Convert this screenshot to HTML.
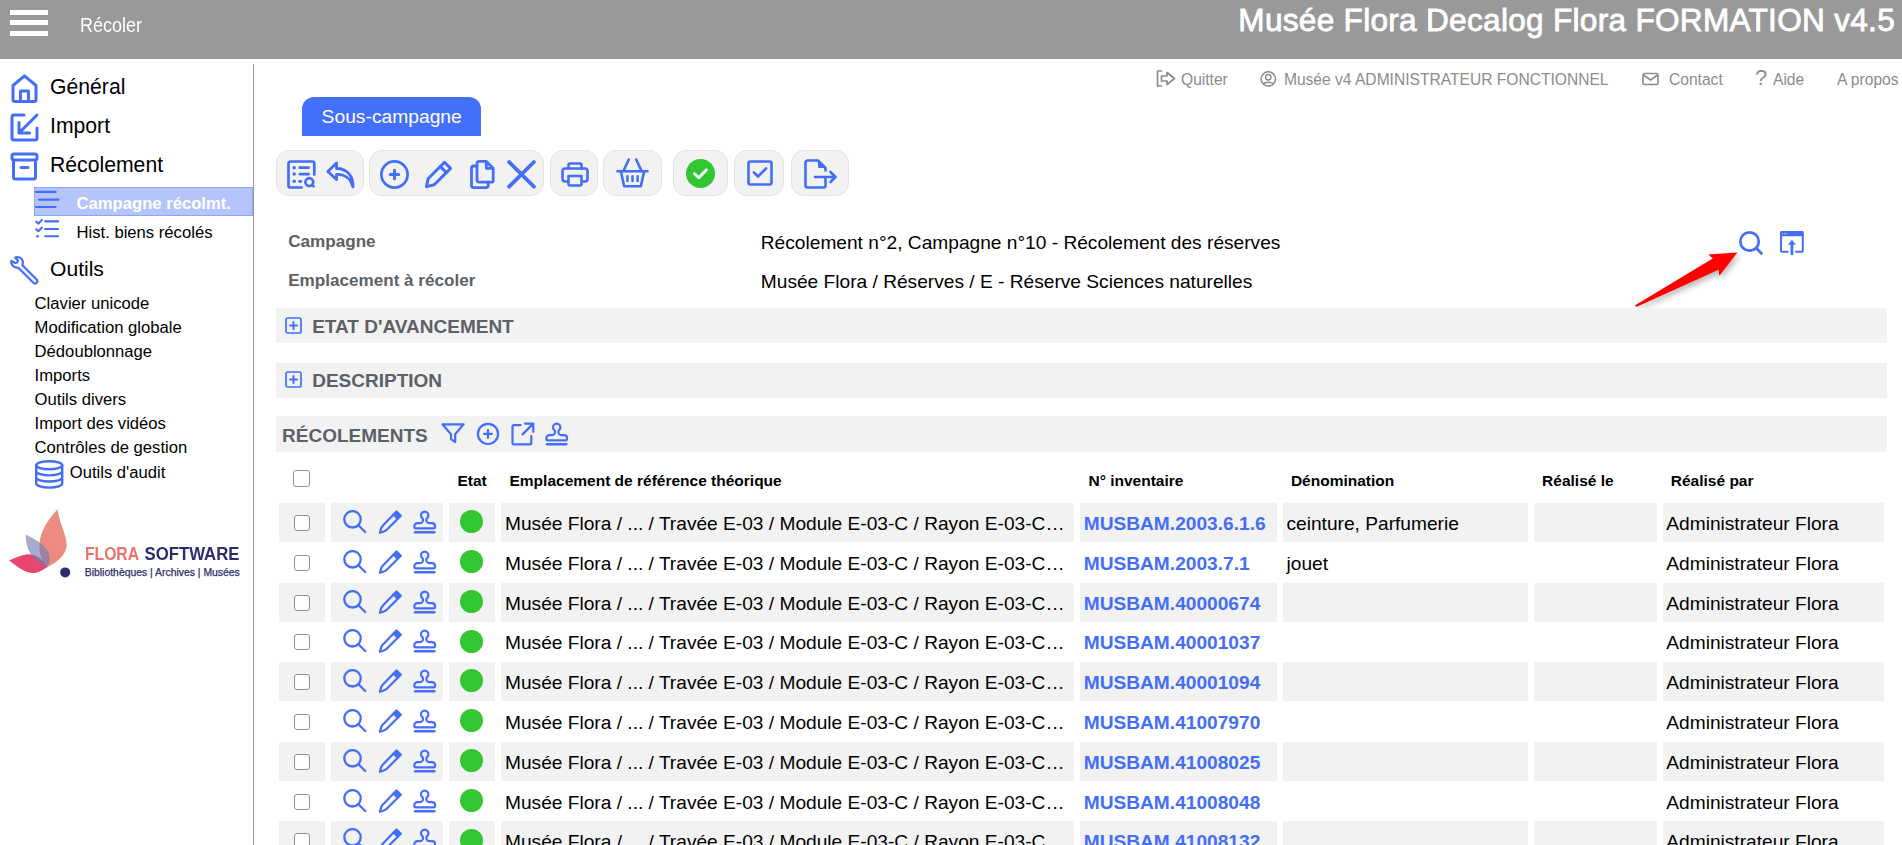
<!DOCTYPE html>
<html><head><meta charset="utf-8">
<style>
html,body{margin:0;padding:0;width:1902px;height:845px;overflow:hidden;background:#fff;font-family:"Liberation Sans",sans-serif;}
.t{position:absolute;white-space:nowrap;line-height:1;}
.a{position:absolute;}
svg{position:absolute;overflow:visible;}
.ic{fill:none;stroke:#446ef9;stroke-linecap:round;stroke-linejoin:round;}
.hdr{position:absolute;left:0;top:0;width:1902px;height:59px;background:#999999;}
.bar{position:absolute;left:10px;width:38px;height:5px;background:#fff;}
.side{position:absolute;left:253px;top:64px;width:1px;height:781px;background:#9a9a9a;}
.sb{font-size:21.2px;color:#000;}
.sub{font-size:16.65px;color:#000;}
.btn{position:absolute;top:150px;height:46px;background:#f2f2f2;border:1px solid #e3e3e3;box-sizing:border-box;border-radius:13px;}
.sec{position:absolute;left:276px;width:1611px;background:#f2f2f2;}
.sect{font-size:19px;font-weight:bold;color:#5b6166;}
.lbl{font-size:17.1px;font-weight:bold;color:#5b6166;}
.val{font-size:19.15px;color:#000;}
.th{font-size:15.5px;font-weight:bold;color:#000;}
.cell{position:absolute;height:38.6px;background:#f2f2f2;}
.cb{position:absolute;width:14px;height:14px;border:1px solid #8f8f9d;border-radius:3px;background:#fff;}
.rt{font-size:19.15px;color:#000;}
.lnk{font-size:19.15px;font-weight:bold;color:#446ef9;}
.top{font-size:15.6px;color:#8c8c8c;}
</style></head><body>
<div class="hdr"></div>
<div class="bar" style="top:9.6px"></div>
<div class="bar" style="top:20.4px"></div>
<div class="bar" style="top:31.2px"></div>
<div class="t" style="left:80px;top:16.9px;font-size:18px;color:#fff;transform:scaleY(1.12);transform-origin:0 15.3px">Récoler</div>
<div class="t" style="right:7px;top:5px;font-size:31.6px;color:#fff;-webkit-text-stroke:0.8px #fff;letter-spacing:0.28px;">Musée Flora Decalog Flora FORMATION v4.5</div>

<div class="side"></div>
<!-- SIDEBAR -->
<svg style="left:11px;top:74px" width="27" height="29" viewBox="0 0 27 29"><path class="ic" stroke-width="3" d="M2 11.5 L13.5 1.8 L25 11.5 V25.5 a2 2 0 0 1 -2 2 H4 a2 2 0 0 1 -2 -2 Z M9.5 27.5 V17 H17.5 V27.5"/></svg>
<div class="t sb" style="left:50px;top:75.5px">Général</div>
<svg style="left:10px;top:113px" width="29" height="29" viewBox="0 0 29 29"><path class="ic" stroke-width="3" d="M14 2 H4 a2 2 0 0 0 -2 2 V25 a2 2 0 0 0 2 2 H25 a2 2 0 0 0 2 -2 V15 M27 2 L9 20 M9 9.5 V20 H19.5"/></svg>
<div class="t sb" style="left:50px;top:114.6px">Import</div>
<svg style="left:10px;top:152px" width="29" height="29" viewBox="0 0 29 29"><path class="ic" stroke-width="3" d="M4 2 H25 a2 2 0 0 1 2 2 V6 a2 2 0 0 1 -2 2 H4 a2 2 0 0 1 -2 -2 V4 a2 2 0 0 1 2 -2 Z M3.5 8 V25 a2 2 0 0 0 2 2 H23.5 a2 2 0 0 0 2 -2 V8 M11 15.5 H18"/></svg>
<div class="t sb" style="left:50px;top:154px">Récolement</div>
<div class="a" style="left:34px;top:187px;width:219px;height:29px;box-sizing:border-box;background:#b5c5fb;border:1px solid #8ba5f8;"></div>
<svg style="left:35px;top:190px" width="25" height="19" viewBox="0 0 25 19"><path class="ic" stroke-width="2.2" d="M1 1.9 H20.5 M4 9.6 H23.5 M1 17 H20.5"/></svg>
<div class="t sub" style="left:76.5px;top:195.85px;font-weight:bold;color:#fff">Campagne récolmt.</div>
<svg style="left:35px;top:219px" width="25" height="19" viewBox="0 0 25 19"><path class="ic" stroke-width="2.1" d="M10.2 2.4 H23.1 M10.2 10 H23.1 M10.2 17.3 H23.1 M1.2 2.6 L3.4 4.6 L6.9 1 M1.2 10.2 L3.4 12.2 L6.9 8.6"/><circle cx="2.6" cy="17.3" r="1.35" fill="#446ef9"/></svg>
<div class="t sub" style="left:76.5px;top:224.85px">Hist. biens récolés</div>
<svg style="left:5px;top:250px" width="40" height="40" viewBox="0 0 40 40"><path class="ic" stroke-width="2.2" d="M10.2 7.6 L12.9 10.3 Q13 12.9 10.4 13 L6.2 10.9 C5.7 15.4 9 17.8 13 17.8 L14.09 18.51 L28.34 32.76 A2.35 2.35 0 0 0 31.66 29.44 L17.41 15.19 C18.4 12.5 18 8.6 14.6 7.5 Q12.2 6.9 10.2 7.6 Z"/></svg>
<div class="t sb" style="left:50px;top:257.5px;font-size:21.1px">Outils</div>
<div class="t sub" style="left:34.6px;top:295.75px">Clavier unicode</div>
<div class="t sub" style="left:34.6px;top:319.75px">Modification globale</div>
<div class="t sub" style="left:34.6px;top:343.75px">Dédoublonnage</div>
<div class="t sub" style="left:34.6px;top:367.75px">Imports</div>
<div class="t sub" style="left:34.6px;top:391.75px">Outils divers</div>
<div class="t sub" style="left:34.6px;top:415.75px">Import des vidéos</div>
<div class="t sub" style="left:34.6px;top:439.75px">Contrôles de gestion</div>
<svg style="left:35px;top:460px" width="29" height="29" viewBox="0 0 29 29"><g class="ic" stroke-width="2.4"><ellipse cx="14.2" cy="5.2" rx="13" ry="4"/><path d="M1.2 5.2 V23.5 C1.2 25.8 7 27.6 14.2 27.6 C21.4 27.6 27.2 25.8 27.2 23.5 V5.2 M1.2 11.3 C1.2 13.6 7 15.4 14.2 15.4 C21.4 15.4 27.2 13.6 27.2 11.3 M1.2 17.4 C1.2 19.7 7 21.5 14.2 21.5 C21.4 21.5 27.2 19.7 27.2 17.4"/></g></svg>
<div class="t sub" style="left:69.7px;top:465.05px">Outils d'audit</div>
<!-- logo -->
<svg style="left:0;top:500px" width="80" height="90" viewBox="0 0 80 90">
<path d="M57.5 9.4 C50 17 40 30 39.4 45 C39 55 43 63 47.4 67 C58 62 66.6 54 66.6 44.7 C66.6 35 60 25 57.5 9.4 Z" fill="#ee8b80"/>
<path d="M9 60.5 C18 67 26 74 35 73 C40 72 44 69.5 47.4 67 C42 58 35 54 27.5 54.3 C21 55 15 58 9 60.5 Z" fill="#e8456f"/>
<path d="M25.6 34.6 C26 46 29 60 47.4 67 C50.5 62 50.5 57 48 51 C44 45 35 39 25.6 34.6 Z" fill="#6a7db2" fill-opacity="0.62"/>
<circle cx="65.2" cy="72.4" r="5" fill="#2b2d6e"/>
</svg>
<div class="t" style="left:85px;top:547px;font-size:15.7px;font-weight:bold;color:#ee7266;transform:scaleY(1.12);transform-origin:0 100%">FLORA</div><div class="t" style="left:144.5px;top:546.6px;font-size:16.75px;font-weight:bold;color:#2b2d6e;transform:scaleY(1.1);transform-origin:0 100%">SOFTWARE</div>
<div class="t" style="left:84.8px;top:567.6px;font-size:10.4px;color:#2b2d6e;-webkit-text-stroke:0.25px #2b2d6e">Bibliothèques | Archives | Musées</div>
<!-- SIDEBAR_END -->

<!-- MAIN -->
<!-- top links -->
<svg style="left:1156px;top:69.5px" width="20" height="17" viewBox="0 0 20 17"><g fill="none" stroke="#8c8c8c" stroke-width="1.7" stroke-linejoin="round" stroke-linecap="round"><path d="M5.5 1 H1.5 V16 H5.5"/><path d="M5.5 6 H11 V2.5 L18.5 8.5 L11 14.5 V11 H5.5 Z"/></g></svg>
<div class="t top" style="left:1181px;top:71.5px">Quitter</div>
<svg style="left:1260px;top:71px" width="17" height="16" viewBox="0 0 17 16"><g fill="none" stroke="#8c8c8c" stroke-width="1.5"><circle cx="8.3" cy="8" r="7.2"/><circle cx="8.3" cy="6.2" r="2.7"/><path d="M3.5 13.2 C5 10.5 11.6 10.5 13.1 13.2"/></g></svg>
<div class="t top" style="left:1283.9px;top:71.5px">Musée v4 ADMINISTRATEUR FONCTIONNEL</div>
<svg style="left:1641.5px;top:72px" width="17" height="14" viewBox="0 0 17 14"><g fill="none" stroke="#8c8c8c" stroke-width="1.6" stroke-linejoin="round"><rect x="1" y="1.5" width="15" height="11" rx="1.5"/><path d="M1.5 3 L8.5 8 L15.5 3"/></g></svg>
<div class="t top" style="left:1669px;top:71.5px">Contact</div>
<div class="t top" style="left:1755px;top:66.6px;font-size:22px;">?</div>
<div class="t top" style="left:1773px;top:71.5px">Aide</div>
<div class="t top" style="left:1837px;top:71.5px">A propos</div>

<!-- tab -->
<div class="a" style="left:302px;top:97px;width:179px;height:39px;background:#446ff8;border-radius:12px 12px 0 0;"></div>
<div class="t" style="left:321.6px;top:106.5px;font-size:19.25px;color:#fff;">Sous-campagne</div>

<!-- toolbar -->
<div class="btn" style="left:276px;width:88px"></div>
<div class="btn" style="left:369px;width:175px"></div>
<div class="btn" style="left:550px;width:48px"></div>
<div class="btn" style="left:603px;width:59px"></div>
<div class="btn" style="left:673px;width:55px"></div>
<div class="btn" style="left:734px;width:50px"></div>
<div class="btn" style="left:791px;width:58px"></div>
<!-- list search -->
<svg style="left:287px;top:160px" width="29" height="29" viewBox="0 0 29 29"><g class="ic" stroke-width="2.7"><path d="M14.6 27.5 H3.5 a2 2 0 0 1 -2 -2 V3.5 a2 2 0 0 1 2 -2 H25.3 a2 2 0 0 1 2 2 V14.6"/><path d="M12.8 7.7 H21.6 M12.8 14.1 H21.6"/><circle cx="22.3" cy="22.1" r="3.9"/><path d="M25.2 25 L26.6 26.4"/></g><g fill="#446ef9"><circle cx="7.2" cy="7.7" r="1.75"/><circle cx="7.2" cy="14.1" r="1.75"/><circle cx="7.2" cy="21.3" r="1.75"/><ellipse cx="13.1" cy="21.3" rx="2" ry="1.6"/></g></svg>
<!-- reply -->
<svg style="left:326px;top:161px" width="29" height="28" viewBox="0 0 29 28"><path class="ic" stroke-width="2.8" d="M10.5 2 L1.8 10.5 L10.5 18.5 V13.5 C18 13 24.5 17 27 26 C27.5 15 21 7.5 10.5 7.5 Z"/></svg>
<!-- plus circle -->
<svg style="left:380px;top:160px" width="29" height="29" viewBox="0 0 29 29"><g class="ic" stroke-width="2.7"><circle cx="14.5" cy="14.5" r="13.1"/><path d="M14.5 10.3 V18.7 M10.3 14.5 H18.7" stroke-width="3"/></g></svg>
<!-- pencil -->
<svg style="left:424px;top:160px" width="29" height="29" viewBox="0 0 29 29"><g class="ic" stroke-width="3"><path d="M20.5 2.3 L26.6 8.4 L10.2 24.8 L2.5 26.6 L4.1 18.7 Z M16.3 6.5 L22.4 12.6"/></g></svg>
<!-- copy -->
<svg style="left:470px;top:160px" width="25" height="29" viewBox="0 0 25 29"><g class="ic" stroke-width="2.8"><path d="M7 3.4 a2 2 0 0 1 2 -2 H16.3 L23.2 8.3 V20.2 a2 2 0 0 1 -2 2 H9 a2 2 0 0 1 -2 -2 Z M16.3 1.4 V8.3 H23.2"/><path d="M7 6 H3.5 a2 2 0 0 0 -2 2 V25.6 a2 2 0 0 0 2 2 H16.2 a2 2 0 0 0 2 -2 V22.2"/></g></svg>
<!-- X -->
<svg style="left:507px;top:160px" width="29" height="29" viewBox="0 0 29 29"><path class="ic" stroke-width="3.8" d="M2.1 2 L26.9 26.7 M26.9 2 L2.1 26.7"/></svg>
<!-- printer -->
<svg style="left:561px;top:162px" width="28" height="25" viewBox="0 0 28 25"><g class="ic" stroke-width="2.6"><path d="M7.5 6.5 V3 a1.5 1.5 0 0 1 1.5 -1.5 H19 a1.5 1.5 0 0 1 1.5 1.5 V6.5"/><path d="M7 19.5 H4 a2.5 2.5 0 0 1 -2.5 -2.5 V9 a2.5 2.5 0 0 1 2.5 -2.5 H24 a2.5 2.5 0 0 1 2.5 2.5 V17 a2.5 2.5 0 0 1 -2.5 2.5 H21"/><path d="M7.5 14 H20.5 V22 a1.5 1.5 0 0 1 -1.5 1.5 H9 a1.5 1.5 0 0 1 -1.5 -1.5 Z"/></g></svg>
<!-- basket -->
<svg style="left:616px;top:158px" width="33" height="30" viewBox="0 0 33 30"><g class="ic" stroke-width="2.6"><path d="M1.5 13.2 H31.5 M4.8 13.2 L8.2 28.2 H24.8 L28.2 13.2 M7.8 12.2 L12.8 1.5 M25.2 12.2 L20.2 1.5"/><path d="M11.4 18.2 V23 M16.5 18.2 V23 M21.6 18.2 V23" stroke-width="2.5"/></g></svg>
<!-- green check -->
<svg style="left:686px;top:158.5px" width="29" height="29" viewBox="0 0 29 29"><circle cx="14.5" cy="14.5" r="14.5" fill="#33c633"/><path d="M8.5 14.8 L12.8 18.8 L20.5 10.8" fill="none" stroke="#fff" stroke-width="2.8" stroke-linecap="round" stroke-linejoin="round"/></svg>
<!-- checkbox -->
<svg style="left:747px;top:160px" width="26" height="26" viewBox="0 0 26 26"><g class="ic" stroke-width="2.6"><rect x="1.5" y="1.5" width="23" height="23" rx="2"/><path d="M7 12.5 L11 16.5 L19 8.5"/></g></svg>
<!-- export -->
<svg style="left:803.5px;top:158.5px" width="34" height="30" viewBox="0 0 34 30"><g class="ic" stroke-width="2.6"><path d="M21.5 18 V26.5 a2 2 0 0 1 -2 2 H3.5 a2 2 0 0 1 -2 -2 V3.5 a2 2 0 0 1 2 -2 H14 L21.5 9 V11.5"/><path d="M11 18 H31.5 M26.5 13 L31.5 18 L26.5 23"/></g><path d="M14 1.5 L21.5 9 H15.5 a1.5 1.5 0 0 1 -1.5 -1.5 Z" fill="#446ef9"/></svg>

<!-- fields -->
<div class="t lbl" style="left:288.2px;top:232.5px">Campagne</div>
<div class="t lbl" style="left:288.2px;top:272.1px">Emplacement à récoler</div>
<div class="t val" style="left:760.8px;top:233.2px">Récolement n°2, Campagne n°10 - Récolement des réserves</div>
<div class="t val" style="left:760.8px;top:271.7px">Musée Flora / Réserves / E - Réserve Sciences naturelles</div>
<svg style="left:1738px;top:230px" width="26" height="26" viewBox="0 0 26 26"><g class="ic" stroke-width="2.7"><circle cx="11.55" cy="11.5" r="9.2"/><path d="M18.3 18.3 L23.5 23.5"/></g></svg>
<svg style="left:1779px;top:230px" width="26" height="26" viewBox="0 0 26 26"><g fill="none" stroke="#446ef9" stroke-width="2" stroke-linecap="round" stroke-linejoin="round"><path d="M8.6 21.8 H3 a1 1 0 0 1 -1 -1 V5 H23.8 V20.8 a1 1 0 0 1 -1 1 H17"/></g><path d="M1 2.6 a1.5 1.5 0 0 1 1.5 -1.5 H23.3 a1.5 1.5 0 0 1 1.5 1.5 V6.2 H1 Z" fill="#446ef9"/><g fill="#dfe6fd"><rect x="3" y="3.2" width="1" height="1"/><rect x="4.9" y="3.2" width="1" height="1"/><rect x="6.8" y="3.2" width="1" height="1"/></g><path d="M9 14.8 L12.95 9.7 L16.8 14.8 Z" fill="#446ef9"/><path d="M12.95 14 V24" stroke="#446ef9" stroke-width="2.7" stroke-linecap="round"/></svg>
<!-- red arrow -->
<svg style="left:0;top:0" width="1902" height="845" viewBox="0 0 1902 845"><defs><filter id="sh" x="-20%" y="-20%" width="150%" height="160%"><feGaussianBlur in="SourceAlpha" stdDeviation="3.2"/><feOffset dx="2" dy="3" result="b"/><feComponentTransfer><feFuncA type="linear" slope="0.3"/></feComponentTransfer><feMerge><feMergeNode/><feMergeNode in="SourceGraphic"/></feMerge></filter></defs>
<path filter="url(#sh)" d="M1635.6 304.9 L1712.8 258.4 L1708.4 254.4 L1737.4 252.5 L1719.4 275.8 L1718.6 269.8 L1636.8 306.7 Q1634.6 307.1 1635.6 304.9 Z" fill="#ff0000"/></svg>

<!-- sections -->
<div class="sec" style="top:308px;height:35px"></div>
<svg style="left:285px;top:316.7px" width="17" height="17" viewBox="0 0 17 17"><g class="ic" stroke-width="1.7"><rect x="1" y="1" width="15" height="15" rx="1.8"/><path d="M8.5 5 V12 M5 8.5 H12" stroke-width="2"/></g></svg>
<div class="t sect" style="left:312.2px;top:316.9px">ETAT D'AVANCEMENT</div>
<div class="sec" style="top:363px;height:35px"></div>
<svg style="left:285px;top:371.1px" width="17" height="17" viewBox="0 0 17 17"><g class="ic" stroke-width="1.7"><rect x="1" y="1" width="15" height="15" rx="1.8"/><path d="M8.5 5 V12 M5 8.5 H12" stroke-width="2"/></g></svg>
<div class="t sect" style="left:312.2px;top:371.3px">DESCRIPTION</div>
<div class="sec" style="top:416px;height:36px"></div>
<div class="t sect" style="left:282.1px;top:425.9px">RÉCOLEMENTS</div>
<svg style="left:441px;top:422px" width="24" height="23" viewBox="0 0 24 23"><path class="ic" stroke-width="2.2" d="M1.4 2.3 H22.6 L14.2 12.3 V20.1 L10 17.1 V12.3 Z"/></svg>
<svg style="left:475.5px;top:421.5px" width="24" height="24" viewBox="0 0 24 24"><g class="ic" stroke-width="2.2"><circle cx="12" cy="11.9" r="10.1"/><path d="M12 8 V15.8 M8.1 11.9 H15.9"/></g></svg>
<svg style="left:510.6px;top:421.5px" width="24" height="24" viewBox="0 0 24 24"><g class="ic" stroke-width="2.2"><path d="M9.6 3.2 H3 a1.5 1.5 0 0 0 -1.5 1.5 V20.8 a1.5 1.5 0 0 0 1.5 1.5 H18.8 a1.5 1.5 0 0 0 1.5 -1.5 V14 M14 1.6 H22.3 V9.8 M22.3 1.6 L11.5 12.4"/></g></svg>
<svg style="left:545px;top:421.5px" width="24" height="24"><use href="#ist"/></svg>
<!-- TABLE -->
<div class="cb" style="left:293px;top:470px;width:15px;height:15px;"></div>
<div class="t th" style="left:457.5px;top:472.9px">Etat</div>
<div class="t th" style="left:509.5px;top:472.9px">Emplacement de référence théorique</div>
<div class="t th" style="left:1088.5px;top:472.9px">N° inventaire</div>
<div class="t th" style="left:1290.9px;top:472.9px">Dénomination</div>
<div class="t th" style="left:1542.1px;top:472.9px">Réalisé le</div>
<div class="t th" style="left:1670.8px;top:472.9px">Réalisé par</div>
<svg width="0" height="0" style="position:absolute"><defs>
<symbol id="isr" viewBox="0 0 24 24"><g class="ic" stroke-width="2.3"><circle cx="9.5" cy="9.3" r="8.2"/><path d="M15.5 15.3 L22.2 22"/></g></symbol>
<symbol id="ipe" viewBox="0 0 24 24"><g class="ic" stroke-width="2.2"><path d="M18.5 1.5 L22.8 5.8 L8.5 20 C7.5 21 5 22 2 22.8 C2.5 19.8 3.5 17 4.5 16 Z"/><path d="M15.5 4.5 L19.5 8.5"/></g><path d="M18.5 1.5 L22.8 5.8 L19.5 9 L15.3 4.7 Z" fill="#446ef9"/></symbol>
<symbol id="ist" viewBox="0 0 24 24"><g class="ic" stroke-width="2.2"><path d="M9.7 8.4 A3.7 3.7 0 1 1 13.7 8.4 C13 10 13.2 12.9 16 13.1 H19 A3 3 0 0 1 22 16.1 V17.2 A1.2 1.2 0 0 1 20.8 18.4 H2.6 A1.2 1.2 0 0 1 1.4 17.2 V16.1 A3 3 0 0 1 4.4 13.1 H7.4 C10.2 12.9 10.4 10 9.7 8.4 Z"/><path d="M2.2 22.3 H21.2" stroke-width="2.6"/></g></symbol>
</defs></svg>
<div class="cell" style="left:279px;top:503.00px;width:46px;height:39.3px"></div>
<div class="cell" style="left:331px;top:503.00px;width:112px;height:39.3px"></div>
<div class="cell" style="left:449px;top:503.00px;width:46px;height:39.3px"></div>
<div class="cell" style="left:501px;top:503.00px;width:573px;height:39.3px"></div>
<div class="cell" style="left:1080px;top:503.00px;width:196.5px;height:39.3px"></div>
<div class="cell" style="left:1283px;top:503.00px;width:245px;height:39.3px"></div>
<div class="cell" style="left:1534px;top:503.00px;width:123px;height:39.3px"></div>
<div class="cell" style="left:1663px;top:503.00px;width:221px;height:39.3px"></div>
<div class="cb" style="left:294px;top:515.00px"></div>
<svg style="left:343px;top:510.00px" width="24" height="24"><use href="#isr"/></svg>
<svg style="left:378px;top:510.00px" width="24" height="24"><use href="#ipe"/></svg>
<svg style="left:413px;top:510.00px" width="24" height="24"><use href="#ist"/></svg>
<div class="a" style="left:460.2px;top:510.20px;width:23px;height:23px;border-radius:50%;background:#33c633"></div>
<div class="t rt" style="left:505px;top:514.02px">Musée Flora / ... / Travée E-03 / Module E-03-C / Rayon E-03-C…</div>
<div class="t lnk" style="left:1083.7px;top:514.02px">MUSBAM.2003.6.1.6</div>
<div class="t rt" style="left:1286.5px;top:514.02px">ceinture, Parfumerie</div>
<div class="t rt" style="left:1666.3px;top:514.02px">Administrateur Flora</div>
<div class="cb" style="left:294px;top:554.80px"></div>
<svg style="left:343px;top:549.80px" width="24" height="24"><use href="#isr"/></svg>
<svg style="left:378px;top:549.80px" width="24" height="24"><use href="#ipe"/></svg>
<svg style="left:413px;top:549.80px" width="24" height="24"><use href="#ist"/></svg>
<div class="a" style="left:460.2px;top:550.00px;width:23px;height:23px;border-radius:50%;background:#33c633"></div>
<div class="t rt" style="left:505px;top:553.82px">Musée Flora / ... / Travée E-03 / Module E-03-C / Rayon E-03-C…</div>
<div class="t lnk" style="left:1083.7px;top:553.82px">MUSBAM.2003.7.1</div>
<div class="t rt" style="left:1286.5px;top:553.82px">jouet</div>
<div class="t rt" style="left:1666.3px;top:553.82px">Administrateur Flora</div>
<div class="cell" style="left:279px;top:582.60px;width:46px;height:39.3px"></div>
<div class="cell" style="left:331px;top:582.60px;width:112px;height:39.3px"></div>
<div class="cell" style="left:449px;top:582.60px;width:46px;height:39.3px"></div>
<div class="cell" style="left:501px;top:582.60px;width:573px;height:39.3px"></div>
<div class="cell" style="left:1080px;top:582.60px;width:196.5px;height:39.3px"></div>
<div class="cell" style="left:1283px;top:582.60px;width:245px;height:39.3px"></div>
<div class="cell" style="left:1534px;top:582.60px;width:123px;height:39.3px"></div>
<div class="cell" style="left:1663px;top:582.60px;width:221px;height:39.3px"></div>
<div class="cb" style="left:294px;top:594.60px"></div>
<svg style="left:343px;top:589.60px" width="24" height="24"><use href="#isr"/></svg>
<svg style="left:378px;top:589.60px" width="24" height="24"><use href="#ipe"/></svg>
<svg style="left:413px;top:589.60px" width="24" height="24"><use href="#ist"/></svg>
<div class="a" style="left:460.2px;top:589.80px;width:23px;height:23px;border-radius:50%;background:#33c633"></div>
<div class="t rt" style="left:505px;top:593.62px">Musée Flora / ... / Travée E-03 / Module E-03-C / Rayon E-03-C…</div>
<div class="t lnk" style="left:1083.7px;top:593.62px">MUSBAM.40000674</div>
<div class="t rt" style="left:1666.3px;top:593.62px">Administrateur Flora</div>
<div class="cb" style="left:294px;top:634.40px"></div>
<svg style="left:343px;top:629.40px" width="24" height="24"><use href="#isr"/></svg>
<svg style="left:378px;top:629.40px" width="24" height="24"><use href="#ipe"/></svg>
<svg style="left:413px;top:629.40px" width="24" height="24"><use href="#ist"/></svg>
<div class="a" style="left:460.2px;top:629.60px;width:23px;height:23px;border-radius:50%;background:#33c633"></div>
<div class="t rt" style="left:505px;top:633.42px">Musée Flora / ... / Travée E-03 / Module E-03-C / Rayon E-03-C…</div>
<div class="t lnk" style="left:1083.7px;top:633.42px">MUSBAM.40001037</div>
<div class="t rt" style="left:1666.3px;top:633.42px">Administrateur Flora</div>
<div class="cell" style="left:279px;top:662.20px;width:46px;height:39.3px"></div>
<div class="cell" style="left:331px;top:662.20px;width:112px;height:39.3px"></div>
<div class="cell" style="left:449px;top:662.20px;width:46px;height:39.3px"></div>
<div class="cell" style="left:501px;top:662.20px;width:573px;height:39.3px"></div>
<div class="cell" style="left:1080px;top:662.20px;width:196.5px;height:39.3px"></div>
<div class="cell" style="left:1283px;top:662.20px;width:245px;height:39.3px"></div>
<div class="cell" style="left:1534px;top:662.20px;width:123px;height:39.3px"></div>
<div class="cell" style="left:1663px;top:662.20px;width:221px;height:39.3px"></div>
<div class="cb" style="left:294px;top:674.20px"></div>
<svg style="left:343px;top:669.20px" width="24" height="24"><use href="#isr"/></svg>
<svg style="left:378px;top:669.20px" width="24" height="24"><use href="#ipe"/></svg>
<svg style="left:413px;top:669.20px" width="24" height="24"><use href="#ist"/></svg>
<div class="a" style="left:460.2px;top:669.40px;width:23px;height:23px;border-radius:50%;background:#33c633"></div>
<div class="t rt" style="left:505px;top:673.22px">Musée Flora / ... / Travée E-03 / Module E-03-C / Rayon E-03-C…</div>
<div class="t lnk" style="left:1083.7px;top:673.22px">MUSBAM.40001094</div>
<div class="t rt" style="left:1666.3px;top:673.22px">Administrateur Flora</div>
<div class="cb" style="left:294px;top:714.00px"></div>
<svg style="left:343px;top:709.00px" width="24" height="24"><use href="#isr"/></svg>
<svg style="left:378px;top:709.00px" width="24" height="24"><use href="#ipe"/></svg>
<svg style="left:413px;top:709.00px" width="24" height="24"><use href="#ist"/></svg>
<div class="a" style="left:460.2px;top:709.20px;width:23px;height:23px;border-radius:50%;background:#33c633"></div>
<div class="t rt" style="left:505px;top:713.02px">Musée Flora / ... / Travée E-03 / Module E-03-C / Rayon E-03-C…</div>
<div class="t lnk" style="left:1083.7px;top:713.02px">MUSBAM.41007970</div>
<div class="t rt" style="left:1666.3px;top:713.02px">Administrateur Flora</div>
<div class="cell" style="left:279px;top:741.80px;width:46px;height:39.3px"></div>
<div class="cell" style="left:331px;top:741.80px;width:112px;height:39.3px"></div>
<div class="cell" style="left:449px;top:741.80px;width:46px;height:39.3px"></div>
<div class="cell" style="left:501px;top:741.80px;width:573px;height:39.3px"></div>
<div class="cell" style="left:1080px;top:741.80px;width:196.5px;height:39.3px"></div>
<div class="cell" style="left:1283px;top:741.80px;width:245px;height:39.3px"></div>
<div class="cell" style="left:1534px;top:741.80px;width:123px;height:39.3px"></div>
<div class="cell" style="left:1663px;top:741.80px;width:221px;height:39.3px"></div>
<div class="cb" style="left:294px;top:753.80px"></div>
<svg style="left:343px;top:748.80px" width="24" height="24"><use href="#isr"/></svg>
<svg style="left:378px;top:748.80px" width="24" height="24"><use href="#ipe"/></svg>
<svg style="left:413px;top:748.80px" width="24" height="24"><use href="#ist"/></svg>
<div class="a" style="left:460.2px;top:749.00px;width:23px;height:23px;border-radius:50%;background:#33c633"></div>
<div class="t rt" style="left:505px;top:752.82px">Musée Flora / ... / Travée E-03 / Module E-03-C / Rayon E-03-C…</div>
<div class="t lnk" style="left:1083.7px;top:752.82px">MUSBAM.41008025</div>
<div class="t rt" style="left:1666.3px;top:752.82px">Administrateur Flora</div>
<div class="cb" style="left:294px;top:793.60px"></div>
<svg style="left:343px;top:788.60px" width="24" height="24"><use href="#isr"/></svg>
<svg style="left:378px;top:788.60px" width="24" height="24"><use href="#ipe"/></svg>
<svg style="left:413px;top:788.60px" width="24" height="24"><use href="#ist"/></svg>
<div class="a" style="left:460.2px;top:788.80px;width:23px;height:23px;border-radius:50%;background:#33c633"></div>
<div class="t rt" style="left:505px;top:792.62px">Musée Flora / ... / Travée E-03 / Module E-03-C / Rayon E-03-C…</div>
<div class="t lnk" style="left:1083.7px;top:792.62px">MUSBAM.41008048</div>
<div class="t rt" style="left:1666.3px;top:792.62px">Administrateur Flora</div>
<div class="cell" style="left:279px;top:821.40px;width:46px;height:39.3px"></div>
<div class="cell" style="left:331px;top:821.40px;width:112px;height:39.3px"></div>
<div class="cell" style="left:449px;top:821.40px;width:46px;height:39.3px"></div>
<div class="cell" style="left:501px;top:821.40px;width:573px;height:39.3px"></div>
<div class="cell" style="left:1080px;top:821.40px;width:196.5px;height:39.3px"></div>
<div class="cell" style="left:1283px;top:821.40px;width:245px;height:39.3px"></div>
<div class="cell" style="left:1534px;top:821.40px;width:123px;height:39.3px"></div>
<div class="cell" style="left:1663px;top:821.40px;width:221px;height:39.3px"></div>
<div class="cb" style="left:294px;top:833.40px"></div>
<svg style="left:343px;top:828.40px" width="24" height="24"><use href="#isr"/></svg>
<svg style="left:378px;top:828.40px" width="24" height="24"><use href="#ipe"/></svg>
<svg style="left:413px;top:828.40px" width="24" height="24"><use href="#ist"/></svg>
<div class="a" style="left:460.2px;top:828.60px;width:23px;height:23px;border-radius:50%;background:#33c633"></div>
<div class="t rt" style="left:505px;top:832.42px">Musée Flora / ... / Travée E-03 / Module E-03-C / Rayon E-03-C…</div>
<div class="t lnk" style="left:1083.7px;top:832.42px">MUSBAM.41008132</div>
<div class="t rt" style="left:1666.3px;top:832.42px">Administrateur Flora</div>
<!-- TABLE_END -->
<!-- MAIN_END -->
</body></html>
